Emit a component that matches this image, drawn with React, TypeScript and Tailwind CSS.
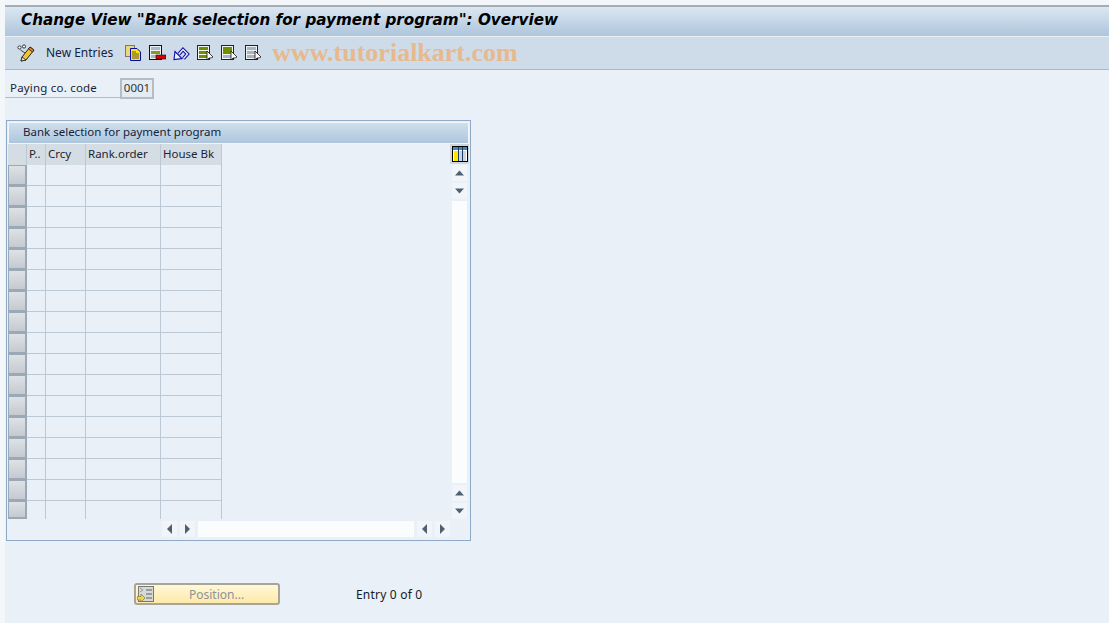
import React from 'react';

const uiFont = "font-['Noto_Sans',sans-serif]";
const rows = Array.from({ length: 17 }, (_, i) => i);

const Glasses = () => (
  <svg width="19" height="18" viewBox="0 0 19 18" className="shrink-0">
    <circle cx="2.5" cy="3.5" r="1.6" fill="#fff" stroke="#222" strokeWidth="0.9" />
    <circle cx="7" cy="2.5" r="1.6" fill="#fff" stroke="#222" strokeWidth="0.9" />
    <path d="M3.5 6 L8 9" stroke="#444" strokeWidth="1" />
    <path d="M5 13 L13 3 L17 6 L9 16 L4 17 Z" fill="#f2c230" stroke="#222" strokeWidth="1" strokeLinejoin="round" />
    <path d="M13 3 L17 6 L15.5 8 L11.5 5 Z" fill="#e8842c" stroke="#222" strokeWidth="0.8" />
    <path d="M5 13 L9 16 L4 17 Z" fill="#f7e3b5" stroke="#222" strokeWidth="0.8" />
  </svg>
);

const CopyIcon = () => (
  <svg width="16" height="16" viewBox="0 0 16 16" className="shrink-0">
    <rect x="0.5" y="0.5" width="9" height="11" fill="#e8d87a" stroke="#777" />
    <path d="M5.5 3.5 H12 L15.5 7 V15.5 H5.5 Z" fill="#ffe600" stroke="#0a0aa8" />
    <path d="M7 7 H11 M7 9 H14 M7 11 H14 M7 13 H14" stroke="#555" strokeWidth="1" />
  </svg>
);

const DeleteRowIcon = () => (
  <svg width="17" height="16" viewBox="0 0 17 16" className="shrink-0">
    <rect x="0.5" y="0.5" width="12" height="14" fill="#eef2f2" stroke="#111" />
    <rect x="2" y="2" width="9" height="3" fill="#a9b9c6" />
    <rect x="2" y="6" width="9" height="3" fill="#8a9a20" />
    <rect x="2" y="10" width="5" height="3" fill="#a9b9c6" />
    <rect x="7" y="10" width="10" height="4" fill="#e00000" stroke="#111" strokeWidth="0.6" />
  </svg>
);

const UndoIcon = () => (
  <svg width="17" height="16" viewBox="0 0 17 16" className="shrink-0">
    <path d="M6 9 L10 4.5 L14.5 9 L10.5 13.5" fill="none" stroke="#0c0ca8" strokeWidth="3.4" strokeLinejoin="miter" />
    <path d="M6 9 L10 4.5 L14.5 9 L10.5 13.5" fill="none" stroke="#eef3f9" strokeWidth="1.4" strokeLinejoin="miter" />
    <path d="M1 14.5 L2 6.5 L9 13.5 Z" fill="#eef3f9" stroke="#0c0ca8" strokeWidth="1.1" strokeLinejoin="miter" />
  </svg>
);

// 0 = all rows marked, 1 = block marked, 2 = nothing marked
const SelectIcon = ({ kind }: { kind: 0 | 1 | 2 }) => (
  <svg width="17" height="16" viewBox="0 0 17 16" className="shrink-0">
    <rect x="0.5" y="0.5" width="12" height="14" fill={kind === 2 ? '#eef2f2' : '#f2f5f2'} stroke="#222" />
    {kind === 0 && (
      <>
        <rect x="2" y="2" width="9" height="3" fill="#6f8f00" />
        <rect x="2" y="6" width="9" height="3" fill="#6f8f00" />
        <rect x="2" y="10" width="9" height="3" fill="#6f8f00" />
      </>
    )}
    {kind === 1 && (
      <>
        <rect x="2" y="2" width="9" height="7" fill="#6f8f00" />
        <rect x="2" y="10" width="9" height="3" fill="#a0b8cc" />
      </>
    )}
    {kind === 2 && (
      <>
        <rect x="2" y="2" width="9" height="3" fill="#a9b4bd" />
        <rect x="2" y="6" width="9" height="3" fill="#a9b4bd" />
        <rect x="2" y="10" width="9" height="3" fill="#a9b4bd" />
      </>
    )}
    <path d="M10 6 L10 15 L12 13 L14 13 L16 12 Z" fill="#fff" stroke="#111" strokeWidth="0.8" />
  </svg>
);

const ColumnsIcon = () => (
  <svg width="16" height="16" viewBox="0 0 16 16">
    <rect x="0.5" y="0.5" width="15" height="15" fill="#fff" stroke="#000" />
    <rect x="1" y="1" width="14" height="3" fill="#3f86c6" />
    <rect x="2" y="5" width="4" height="10" fill="#ffe600" />
    <rect x="7" y="5" width="3" height="10" fill="#c9d4dc" />
    <rect x="11" y="5" width="3" height="10" fill="#c9d4dc" />
    <path d="M6.5 1 V15 M10.5 1 V15" stroke="#1d3f66" strokeWidth="1" />
  </svg>
);

const PositionIcon = () => (
  <svg width="17" height="17" viewBox="0 0 17 17" className="shrink-0">
    <rect x="1.5" y="0.5" width="15" height="15" fill="#d6dad6" stroke="#777" />
    <path d="M9 4 H15 M9 8 H15 M9 12 H15" stroke="#888" strokeWidth="1.5" />
    <path d="M3 2 L6 4 L3 6" fill="none" stroke="#999" />
    <path d="M0.5 10.5 H4 V8 L8 12 L4 16 V14 H0.5 Z" fill="#f2d35a" stroke="#8a7a30" strokeWidth="0.7" />
  </svg>
);

const ScrollBtn = ({ dir }: { dir: 'up' | 'down' | 'left' | 'right' }) => {
  const points = {
    up: '3,10.5 7.5,5.5 12,10.5',
    down: '3,5.5 12,5.5 7.5,10.5',
    left: '10,3 10,13 5,8',
    right: '5,3 5,13 10,8',
  }[dir];
  return (
    <div className="w-[15px] h-[16px] bg-[#f1f5f9] flex items-center justify-center">
      <svg width="15" height="16" viewBox="0 0 15 16">
        <polygon points={points} fill="#4d6175" />
      </svg>
    </div>
  );
};

export default function App() {
  return (
    <div className={`w-[1109px] h-[623px] overflow-hidden bg-[#f4f7fa] pl-[5px] pt-[5px] ${uiFont}`}>
      <div className="h-full bg-[#e9f0f7] flex flex-col">
        <div className="h-[31px] border-t-2 border-[#a3adb8] bg-gradient-to-b from-[#dbe7f1] to-[#aec5dc] pl-4 pb-[2px] flex items-center">
          <h1 className="font-['DejaVu_Sans',sans-serif] font-bold italic text-[15.2px] leading-none text-black whitespace-nowrap">
            Change View "Bank selection for payment program": Overview
          </h1>
        </div>

        <div className="h-[34px] border-t border-[#e8eff5] border-b border-b-[#a9b8c6] bg-[#cddce8] flex items-center pl-[12px]">
          <Glasses />
          <span className="ml-[10px] text-[12px] text-[#15233a] whitespace-nowrap">New Entries</span>
          <div className="ml-[12px] flex items-center">
            <div className="w-[24px]"><CopyIcon /></div>
            <div className="w-[24px]"><DeleteRowIcon /></div>
            <div className="w-[24px]"><UndoIcon /></div>
            <div className="w-[24px]"><SelectIcon kind={0} /></div>
            <div className="w-[24px]"><SelectIcon kind={1} /></div>
            <div className="w-[24px]"><SelectIcon kind={2} /></div>
          </div>
          <span className="ml-[3px] font-['Liberation_Serif',serif] font-bold text-[26px] leading-none text-[#e8b98c] whitespace-nowrap">
            www.tutorialkart.com
          </span>
        </div>

        <div className="flex items-center h-[22px] mt-[7px]">
          <div className="w-[115px] h-[20px] border-b border-[#b3bcc4] text-[11.5px] tracking-[0.2px] text-[#1b2533] pl-[5px] leading-[20px] whitespace-nowrap">
            Paying co. code
          </div>
          <div className="w-[34px] h-[21px] border-2 border-[#b5bdc4] bg-[#e4ecf3] text-[11.5px] text-[#333] flex items-center justify-center">
            0001
          </div>
        </div>

        <section className="mt-[21px] ml-px w-[465px] h-[421px] shrink-0 border border-[#8dabc9] p-px flex flex-col">
          <div className="h-[22px] shrink-0 border border-[#f2f6fa] bg-gradient-to-b from-[#cfdfec] to-[#aec6dd] pl-[14px] text-[11.5px] leading-[17px] text-[#15233a] whitespace-nowrap">
            Bank selection for payment program
          </div>

          <div className="flex-1 flex">
            <div className="w-[443px]">
              <div className="flex h-[21px] text-[11.5px] text-[#1b2533] leading-[20px]">
                <div className="w-[19px] bg-[#d5dde4] border-r border-[#bcc8d3]" />
                <div className="w-[19px] bg-[#d5dde4] border-r border-[#bcc8d3] pl-[2px]">P..</div>
                <div className="w-[40px] bg-[#d5dde4] border-r border-[#bcc8d3] pl-[2px]">Crcy</div>
                <div className="w-[75px] bg-[#d5dde4] border-r border-[#bcc8d3] pl-[2px]">Rank.order</div>
                <div className="w-[61px] bg-[#d5dde4] border-r border-[#bcc8d3] pl-[2px]">House Bk</div>
              </div>
              {rows.map((r) => (
                <div key={r} className={r < 16 ? 'flex h-[21px]' : 'flex h-[18px]'}>
                  <div className="w-[19px] bg-gradient-to-b from-[#dde2e6] to-[#c4cad0] border-2 border-[#9ba8b5] border-t border-l" />
                  <div className={`w-[19px] border-r border-[#bcc8d3] ${r < 16 ? 'border-b' : ''}`} />
                  <div className={`w-[40px] border-r border-[#bcc8d3] ${r < 16 ? 'border-b' : ''}`} />
                  <div className={`w-[75px] border-r border-[#bcc8d3] ${r < 16 ? 'border-b' : ''}`} />
                  <div className={`w-[61px] border-r border-[#bcc8d3] ${r < 16 ? 'border-b' : ''}`} />
                </div>
              ))}
              <div className="flex items-center gap-[3px] ml-[154px] mt-[2px]">
                <ScrollBtn dir="left" />
                <ScrollBtn dir="right" />
                <div className="w-[216px] h-[16px] bg-[#fbfcfd]" />
                <ScrollBtn dir="left" />
                <ScrollBtn dir="right" />
              </div>
            </div>

            <div className="w-[19px] flex flex-col items-center">
              <div className="w-[19px] h-[20px] bg-[#cfd6dc] flex items-center justify-center">
                <ColumnsIcon />
              </div>
              <div className="mt-[1px] flex flex-col gap-[2px]">
                <ScrollBtn dir="up" />
                <ScrollBtn dir="down" />
                <div className="w-[15px] h-[282px] bg-[#fbfcfd]" />
                <ScrollBtn dir="up" />
                <ScrollBtn dir="down" />
              </div>
            </div>
          </div>
        </section>

        <div className="flex items-center mt-[42px] ml-[129px]">
          <button className="w-[146px] h-[22px] rounded-[3px] border-2 border-[#a8a598] bg-gradient-to-b from-[#fff8d8] to-[#fde9a8] flex items-center pl-[1px] text-[12px] text-[#8d9299]">
            <PositionIcon />
            <span className="ml-[35px] pt-px">Position...</span>
          </button>
          <span className="ml-[76px] pt-[2px] text-[12px] tracking-[0.2px] text-[#111a26] whitespace-nowrap">Entry 0 of 0</span>
        </div>
      </div>
    </div>
  );
}
